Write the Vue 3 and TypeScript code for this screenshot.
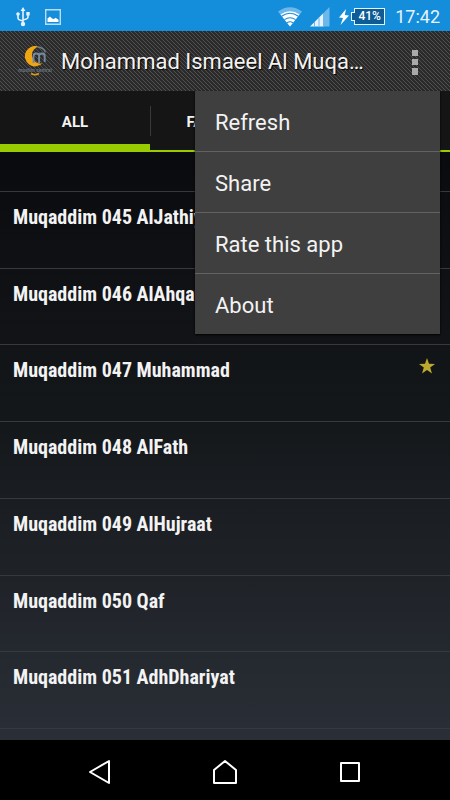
<script setup lang="ts">
import { ref } from 'vue'

interface Track {
  title: string
  starred?: boolean
}

const menuItems: string[] = ['Refresh', 'Share', 'Rate this app', 'About']
const tabs: string[] = ['ALL', 'FAVORITES']
const activeTab = ref(0)
const menuOpen = ref(true)

const tracks: Track[] = [
  { title: 'Muqaddim 045 AlJathiyah' },
  { title: 'Muqaddim 046 AlAhqaf' },
  { title: 'Muqaddim 047 Muhammad', starred: true },
  { title: 'Muqaddim 048 AlFath' },
  { title: 'Muqaddim 049 AlHujraat' },
  { title: 'Muqaddim 050 Qaf' },
  { title: 'Muqaddim 051 AdhDhariyat' },
]
</script>

<template>
  <div class="screen">
    <div class="status">
      <svg class="usb" width="14" height="20" viewBox="0 0 14 20" fill="none" stroke="#e6f3fc" stroke-width="1.6">
        <path d="M7 3v14M2 7v4q0 2 5 3M12 7v3q0 2-5 3" />
        <path d="M7 0L4.600 4h4.800z" fill="#e6f3fc" stroke="none" />
        <circle cx="7" cy="17" r="2.200" fill="#e6f3fc" stroke="none" />
        <circle cx="2" cy="7" r="1.800" fill="#e6f3fc" stroke="none" />
        <path d="M10.300 5h3.400v3.400h-3.400z" fill="#e6f3fc" stroke="none" />
      </svg>
      <svg width="16" height="16" viewBox="0 0 16 16">
        <path d="M.7.700h14.600v14.600H.7z" fill="none" stroke="#b9dcf5" stroke-width="1.400" />
        <path d="M2.500 13V9.500L5 7.500l2 2 2 .5 1.500-1.200 3 2V13z" fill="#fff" />
      </svg>
      <span class="spacer"></span>
      <svg class="wifi" width="24" height="20" viewBox="0 0 24 20">
        <path d="M12 19.500L0 4.500Q12-4 24 4.500z" fill="#6db8ea" />
        <path d="M12 19.500L2.500 7.500Q12 1 21.500 7.500z" fill="#fff" />
        <path d="M3.600 9.200Q12 3.400 20.400 9.200M6.500 12.600Q12 8.800 17.500 12.600M9 15.800Q12 13.800 15 15.800" fill="none" stroke="#148ddb" stroke-width="1.100" />
      </svg>
      <svg class="signal" width="20" height="20" viewBox="0 0 20 20">
        <path d="M0 19.500L13.500 6v13.500z" fill="#e6f3fc" />
        <path d="M14 5.500L19.500 0v19.500H14z" fill="#6db8ea" />
        <path d="M4.500 15v5M9 10.500v9M13.500 6v13.500" stroke="#6db8ea" stroke-width="1" />
      </svg>
      <svg class="bolt" width="10" height="16" viewBox="0 0 10 16">
        <path d="M7 0L0 8.500l4 .5-2.500 7L10 6.500 5.800 6z" fill="#fff" />
      </svg>
      <span class="battery">41%</span>
      <span class="clock">17:42</span>
    </div>

    <header class="bar">
      <svg class="logo" width="36" height="32" viewBox="0 0 36 32">
        <path d="M21.500 .600A10.200 10.200 0 1 0 25.500 17.200A8.300 8.300 0 1 1 21.500 .600z" fill="#f0a613" />
        <path d="M20.500 1Q27 1.500 28.500 6.500" fill="none" stroke="#6f7f8e" stroke-width="1.300" />
        <path d="M16.500 17V10q0-2.500 2.800-2.500T22.100 10v7M22.100 10q0-2.500 2.800-2.500T27.700 10v6" fill="none" stroke="#7489a0" stroke-width="1.900" />
        <text x="18" y="26" text-anchor="middle" class="logo-text">muslim central</text>
        <path d="M14 27.500q4 2.500 8 0" fill="none" stroke="#dc9c16" stroke-width="1.500" />
      </svg>
      <h1 class="title">Mohammad Ismaeel Al Muqa…</h1>
      <button class="more" type="button" aria-label="More options" @click="menuOpen = !menuOpen">
        <svg width="6" height="25" viewBox="0 0 6 25" fill="#a9a9a9">
          <rect width="6" height="6" /><rect y="9" width="6" height="6" /><rect y="18" width="6" height="7" />
        </svg>
      </button>
    </header>

    <main class="content">
      <nav class="tabs">
        <button
          v-for="(tab, i) in tabs"
          :key="tab"
          type="button"
          class="tab"
          :class="{ active: i === activeTab }"
          @click="activeTab = i"
        >{{ tab }}</button>
        <span class="tab"></span>
      </nav>

      <ul class="list">
        <li class="row"></li>
        <li v-for="track in tracks" :key="track.title" class="row">
          <span class="name">{{ track.title }}</span>
          <svg v-if="track.starred" class="star" width="16" height="16" viewBox="0 0 16 16">
            <path d="M8 0l2 5.700 6 .2-4.800 3.700L13 15.500 8 12l-5 3.500 1.800-5.900L0 5.900l6-.2z" fill="#bda92d" />
          </svg>
        </li>
        <li class="row"></li>
      </ul>

      <div v-if="menuOpen" class="menu">
        <button v-for="item in menuItems" :key="item" type="button" class="menu-item">{{ item }}</button>
      </div>
    </main>

    <footer class="navbar">
      <button type="button" aria-label="Back">
        <svg width="24" height="26" viewBox="0 0 24 26" fill="none" stroke="#fff" stroke-width="2" stroke-linejoin="round">
          <path d="M2 13L21 2v22z" />
        </svg>
      </button>
      <button type="button" aria-label="Home">
        <svg width="26" height="26" viewBox="0 0 26 26" fill="none" stroke="#fff" stroke-width="2" stroke-linejoin="round">
          <path d="M2 11L13 2l11 9v13H2z" />
        </svg>
      </button>
      <button type="button" aria-label="Recent apps">
        <svg width="22" height="22" viewBox="0 0 22 22" fill="none" stroke="#fff" stroke-width="2" stroke-linejoin="round">
          <path d="M2 2h18v18H2z" />
        </svg>
      </button>
    </footer>
  </div>
</template>

<style>
body {
  margin: 0;
  background: #000;
}
</style>

<style scoped>
.screen {
  display: flex;
  flex-direction: column;
  min-height: 100vh;
  color: #f3f3f3;
  font-family: Roboto, sans-serif;
}
svg {
  display: block;
  flex: none;
}
button {
  margin: 0;
  padding: 0;
  border: 0;
  background: none;
  color: inherit;
  font: inherit;
}
.status {
  display: flex;
  align-items: center;
  box-sizing: border-box;
  height: 31px;
  padding: 2px 10px 0 16px;
  background: #148ddb;
}
.usb {
  margin-right: 15px;
}
.spacer {
  flex: 1;
}
.wifi {
  margin-right: 8px;
}
.signal {
  margin-right: 9px;
}
.bolt {
  margin-right: 5px;
}
.battery {
  position: relative;
  box-sizing: border-box;
  width: 31px;
  height: 17px;
  margin-right: 10px;
  border: 1px solid #e6f3fc;
  background: #0d5c95;
  color: #fff;
  font-size: 12px;
  font-weight: 500;
  line-height: 15px;
  text-align: center;
}
.battery::before {
  content: '';
  position: absolute;
  top: 3px;
  left: -4px;
  width: 3px;
  height: 7px;
  border: 1px solid #e6f3fc;
  border-right: 0;
  background: #0d5c95;
}
.clock {
  color: #e6f3fc;
  font-size: 18px;
  line-height: 20px;
}
.bar {
  display: flex;
  align-items: center;
  box-sizing: border-box;
  height: 60px;
  padding: 2px 17px 0;
  background: #2c2c2c linear-gradient(45deg, #2a2a2a 18%, #505050 25%, #2a2a2a 38%, #2a2a2a 62%, #505050 75%, #2a2a2a 82%) 0 0 / 4px 4px;
}
.logo {
  margin-right: 8px;
}
.logo-text {
  fill: #66717c;
  font-size: 5px;
  font-weight: 700;
}
.title {
  flex: 1;
  min-width: 0;
  margin: 0;
  overflow: hidden;
  font-size: 22px;
  font-weight: 400;
  line-height: 30px;
  text-overflow: ellipsis;
  text-shadow: 1px 1px 1px #000;
  white-space: nowrap;
}
.more {
  padding: 0 15px;
}
.content {
  position: relative;
  display: flex;
  flex: 1;
  flex-direction: column;
  background: linear-gradient(#07080b, #15181b 52%, #2a2f37);
}
.tabs {
  display: grid;
  grid-template-columns: repeat(3, 1fr);
  height: 61px;
  background: #151515;
}
.tab {
  position: relative;
  padding-top: 2px;
  border-bottom: 2px solid #99cc00;
  font-size: 15px;
  font-weight: 700;
  line-height: 20px;
}
.tab.active {
  padding-top: 8px;
  border-bottom-width: 8px;
}
.tab + .tab::before {
  content: '';
  position: absolute;
  top: 15px;
  left: 0;
  width: 1px;
  height: 30px;
  background: #393939;
}
.list {
  display: grid;
  flex: 1;
  grid-template-rows: 40px repeat(7, minmax(60px, 1fr)) 11px;
  margin: 0;
  padding: 0;
  list-style: none;
}
.row {
  display: flex;
  align-items: flex-start;
  justify-content: space-between;
  box-sizing: border-box;
  padding: 0 15px 0 13px;
  border-bottom: 1px solid #36393d;
}
.row:last-child {
  border-bottom: 0;
}
.name {
  padding-top: 13px;
  font-family: 'Roboto Condensed', 'Liberation Sans Narrow', Roboto, sans-serif;
  font-size: 20px;
  font-weight: 700;
  line-height: 24px;
}
.star {
  margin-top: 13px;
}
.menu {
  position: absolute;
  top: 0;
  right: 10px;
  display: flex;
  flex-direction: column;
  width: 245px;
  background: #3f3f3f;
  box-shadow: 0 1px 2px #000;
}
.menu-item {
  box-sizing: border-box;
  height: 61px;
  padding: 3px 20px 0;
  border-bottom: 1px solid #626262;
  font-size: 22px;
  line-height: 30px;
  text-align: left;
}
.menu-item:last-child {
  height: 60px;
  border-bottom: 0;
}
.navbar {
  display: grid;
  grid-template-columns: repeat(3, 125px);
  justify-content: center;
  height: 60px;
  padding-top: 4px;
  box-sizing: border-box;
  background: #000;
}
.navbar button {
  display: flex;
  align-items: center;
  justify-content: center;
}
</style>
